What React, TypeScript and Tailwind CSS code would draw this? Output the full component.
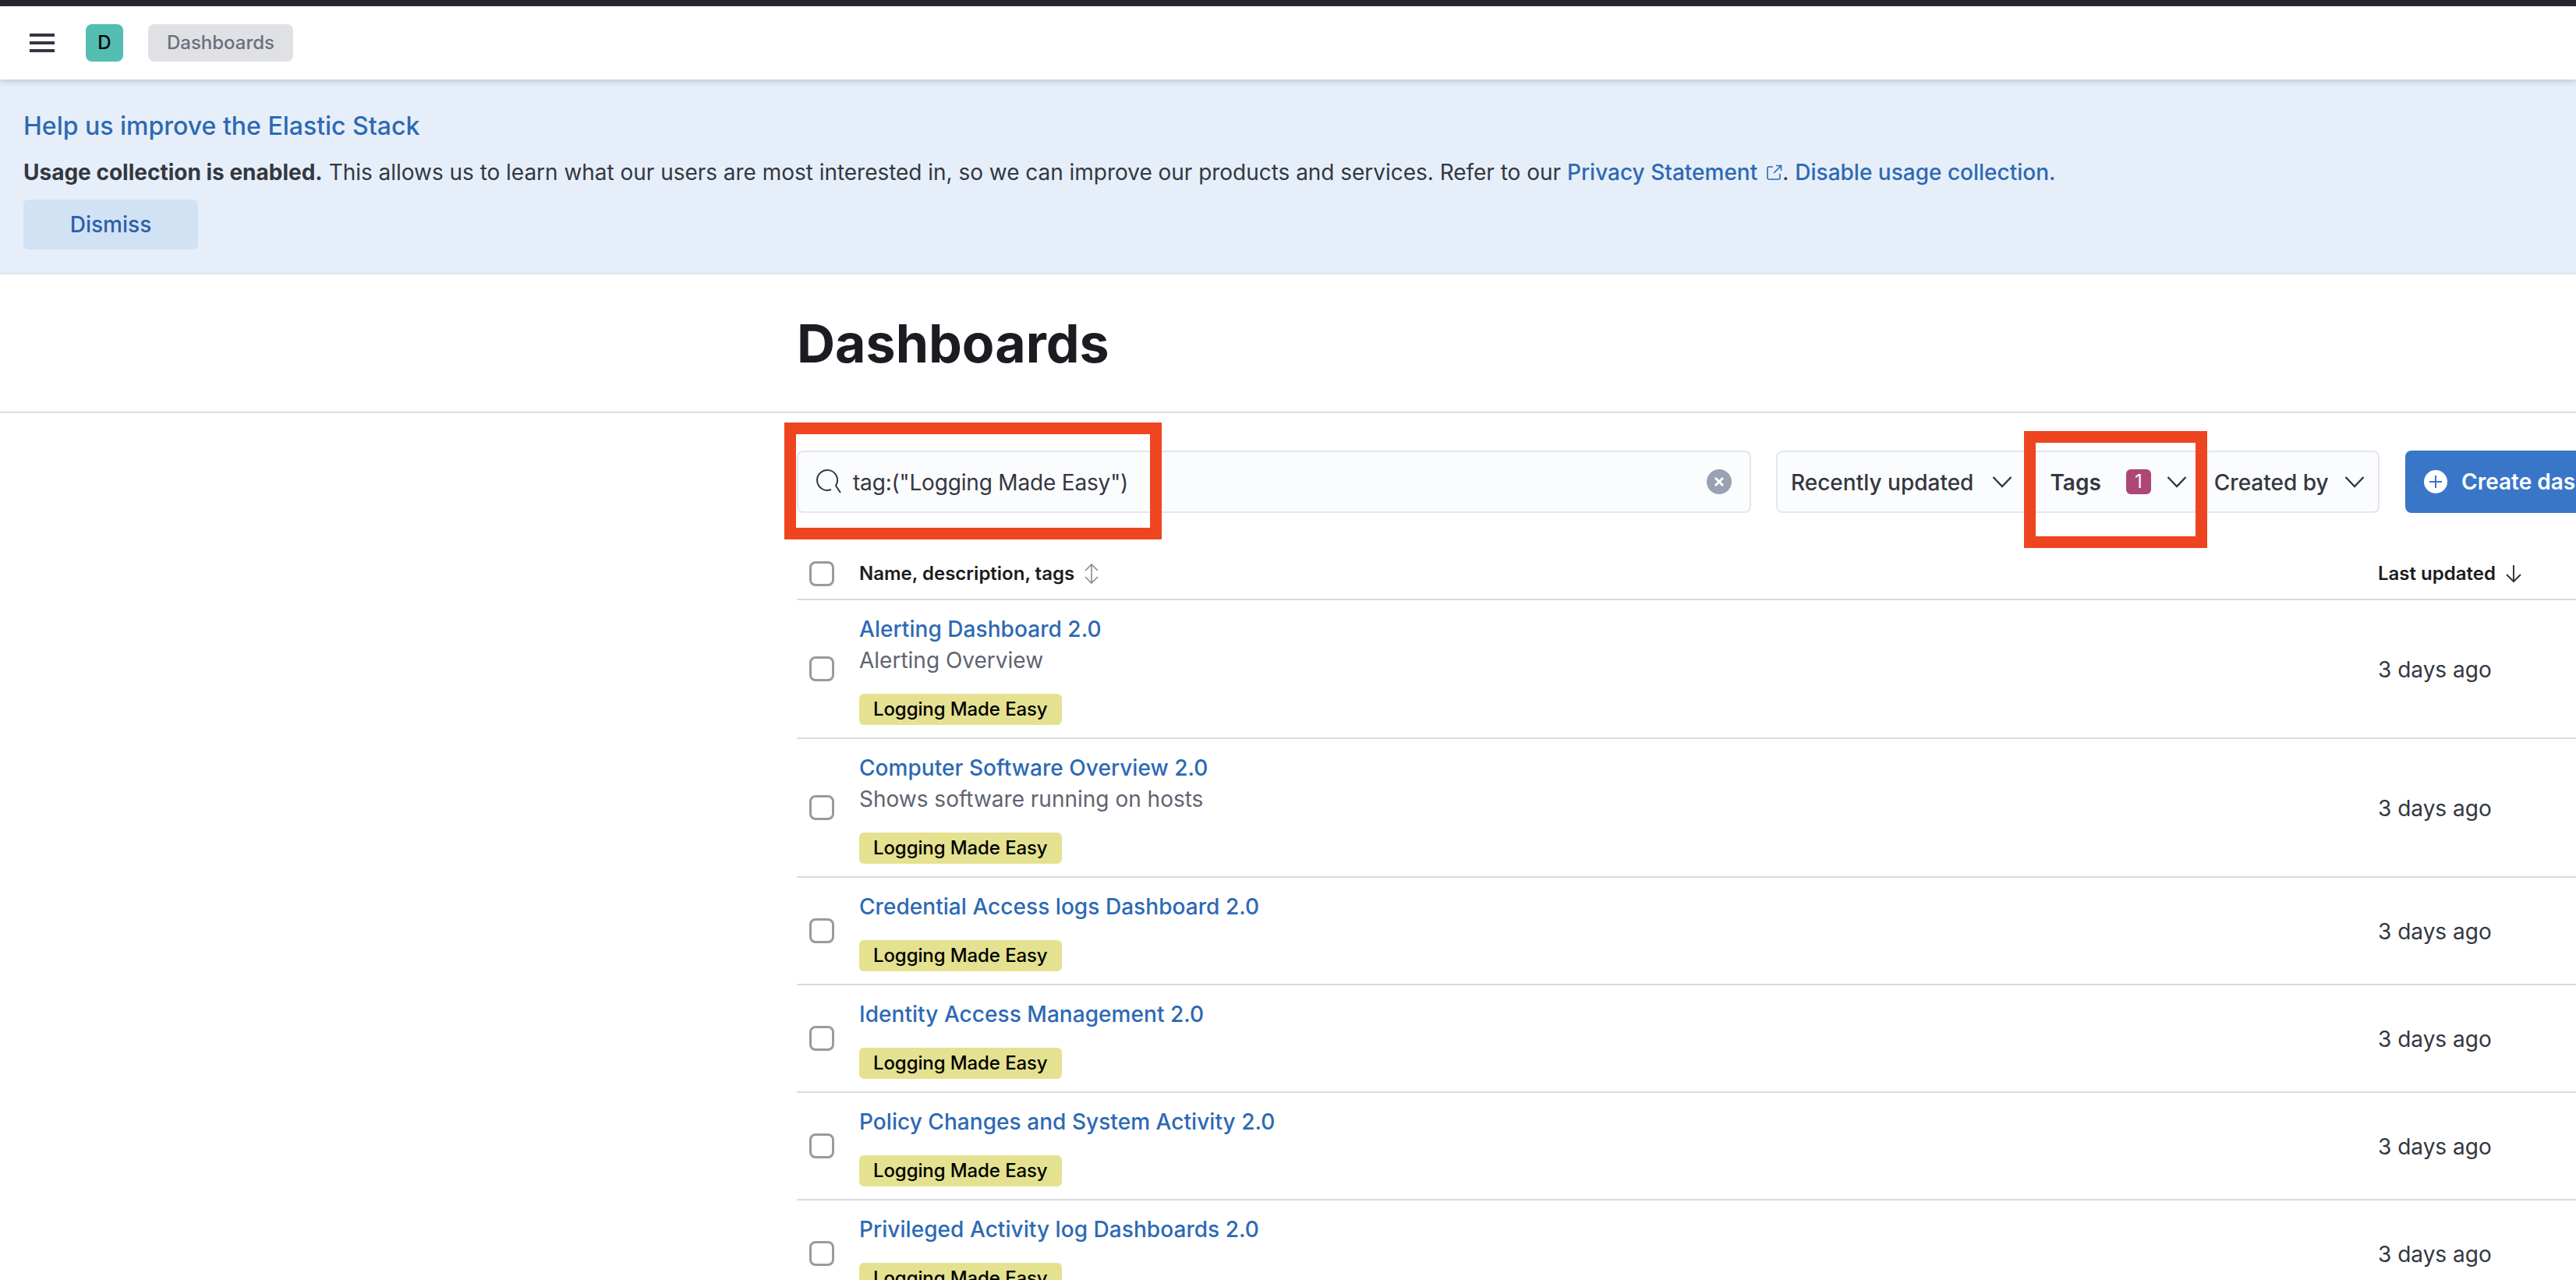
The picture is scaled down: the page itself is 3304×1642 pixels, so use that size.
const rows = [
  { title: "Alerting Dashboard 2.0", description: "Alerting Overview" },
  { title: "Computer Software Overview 2.0", description: "Shows software running on hosts" },
  { title: "Credential Access logs Dashboard 2.0" },
  { title: "Identity Access Management 2.0" },
  { title: "Policy Changes and System Activity 2.0" },
  { title: "Privileged Activity log Dashboards 2.0" },
];

function Chevron({ className }: { className?: string }) {
  return (
    <svg className={className} width="26" height="16" viewBox="0 0 26 16" fill="none" stroke="#343741" strokeWidth="2.4">
      <path d="M1.5 2 L13 14 L24.5 2" />
    </svg>
  );
}

function Checkbox() {
  return <div className="h-8 w-8 shrink-0 rounded-lg border-[3px] border-[#9a9a9c] bg-white" />;
}

function Row({ title, description }: { title: string; description?: string }) {
  return (
    <div className="flex items-center border-b-2 border-[#d6dbe8]">
      <div className="flex w-20 shrink-0 pl-4">
        <Checkbox />
      </div>
      <div className="w-[1948px] shrink-0 pt-[17px] pb-4">
        <div className="text-[28px] leading-10 font-medium tracking-[0.05px] text-[#2d69b4]">{title}</div>
        {description && <div className="text-[28px] leading-10 text-[#5f6470]">{description}</div>}
        <div className="mt-[23px] flex">
          <span className="flex h-10 items-center rounded-md bg-[#e4e290] px-[18px] text-2xl font-medium tracking-[-0.1px] text-black">
            Logging Made Easy
          </span>
        </div>
      </div>
      <div className="pt-[1px] text-[28px] text-[#343741]">3 days ago</div>
    </div>
  );
}

export default function App() {
  return (
    <div className="relative h-[1642px] w-[3304px] overflow-hidden bg-white font-['Inter',sans-serif]">
      <div className="h-2 bg-[#25262e]" />

      {/* top nav */}
      <header className="relative z-10 flex h-[94px] items-center bg-white pl-[38px] shadow-[0_2px_8px_rgba(90,110,140,0.35)]">
        <svg width="32" height="24" viewBox="0 0 32 24" fill="#343741">
          <rect width="32" height="4" />
          <rect y="10" width="32" height="4" />
          <rect y="20" width="32" height="4" />
        </svg>
        <div className="ml-10 flex h-12 w-12 items-center justify-center rounded-lg bg-[#54bdb2] text-2xl font-medium text-black">
          D
        </div>
        <div className="ml-8 flex h-12 w-[186px] items-center justify-center rounded-lg bg-[#e0e1e4] text-2xl font-medium text-[#69707d]">
          Dashboards
        </div>
      </header>

      {/* usage banner */}
      <section className="h-[250px] border-b-2 border-[#dde5ee] bg-[#e6eff9] pt-10 pl-[30px]">
        <h2 className="text-[32px] leading-10 font-medium text-[#2d69b4]">Help us improve the Elastic Stack</h2>
        <p className="mt-[19px] flex items-center text-[28px] leading-10 text-[#343741]">
          <strong className="font-bold">Usage collection is enabled.</strong>
          <span className="ml-2 tracking-[-0.03px]">
            This allows us to learn what our users are most interested in, so we can improve our products and services. Refer to our
          </span>
          <span className="ml-2 font-medium text-[#2d69b4]">Privacy Statement</span>
          <svg className="ml-[12px]" width="20" height="20" viewBox="0 0 20 20" fill="none" stroke="#2d69b4" strokeWidth="1.6">
            <path d="M8 3 H3 Q1 3 1 5 V17 Q1 19 3 19 H15 Q17 19 17 17 V12" />
            <path d="M9 11 L18 2 M12 1.5 H18.5 V8" />
          </svg>
          <span>.</span>
          <span className="ml-2 font-medium text-[#2d69b4]">Disable usage collection.</span>
        </p>
        <button className="mt-[15px] flex h-16 w-56 items-center justify-center rounded-md bg-[#d1e2f5] text-[28px] font-medium text-[#2c5fa8]">
          Dismiss
        </button>
      </section>

      {/* page title */}
      <div className="h-[178px] border-b-2 border-[#d6dbe8] pt-[47px] pl-[1022px]">
        <h1 className="text-[68px] leading-[82px] font-bold text-[#1a1c21]">Dashboards</h1>
      </div>

      <main className="box-content w-[2600px] pt-12 pl-[1022px]">
        {/* toolbar */}
        <div className="flex h-20 items-stretch">
          <div className="flex w-[1224px] items-center rounded-lg border-2 border-[#e3e6ee] bg-[#fbfcfd] pr-[23px] pl-[22px]">
            <svg width="34" height="34" viewBox="0 0 34 34" fill="none" stroke="#343741" strokeWidth="2">
              <path d="M20 27 A13 13 0 1 1 26 22 L32 31" />
            </svg>
            <span className="ml-[14px] flex-1 pt-[1px] text-[28px] tracking-[-0.18px] text-[#343741]">tag:("Logging Made Easy")</span>
            <svg width="32" height="32" viewBox="0 0 32 32">
              <circle cx="16" cy="16" r="16" fill="#98a2b3" />
              <path d="M11 11 L21 21 M21 11 L11 21" stroke="#fff" strokeWidth="3" />
            </svg>
          </div>
          <div className="ml-8 flex w-[774px] items-center rounded-lg border-2 border-[#e3e6ee] bg-[#fbfcfd] pl-[17px]">
            <span className="pt-[1px] text-[28px] font-medium text-[#343741]">Recently updated</span>
            <Chevron className="ml-6" />
            <span className="ml-[48px] pt-[1px] text-[28px] font-semibold text-[#343741]">Tags</span>
            <span className="ml-8 flex h-8 w-8 items-center justify-center rounded-md bg-[#ae4676] text-2xl text-white">1</span>
            <Chevron className="ml-5" />
            <span className="ml-[35px] pt-[1px] text-[28px] font-medium text-[#343741]">Created by</span>
            <Chevron className="ml-5" />
          </div>
          <button className="ml-[33px] flex w-[400px] items-center rounded-lg bg-[#3a76c8] pl-6 text-[28px] font-semibold text-white">
            <svg width="30" height="30" viewBox="0 0 30 30">
              <circle cx="15" cy="15" r="15" fill="#fff" />
              <path d="M15 7 V23 M7 15 H23" stroke="#3a76c8" strokeWidth="2" />
            </svg>
            <span className="ml-[18px]">Create dashboard</span>
          </button>
        </div>

        {/* table */}
        <div className="mt-[46px] flex h-[66px] items-center border-b-2 border-[#d6dbe8]">
          <div className="flex w-20 shrink-0 pl-4">
            <Checkbox />
          </div>
          <div className="flex w-[1948px] shrink-0 items-center">
            <span className="text-2xl font-semibold text-[#1a1c21]">Name, description, tags</span>
            <svg className="ml-3" width="20" height="26" viewBox="0 0 20 26" fill="none" stroke="#8a8c90" strokeWidth="1.6">
              <path d="M2 9 L10 1 L18 9 M2 17 L10 25 L18 17 M10 1 V25" />
            </svg>
          </div>
          <span className="text-2xl font-semibold text-[#1a1c21]">Last updated</span>
          <svg className="ml-3" width="22" height="24" viewBox="0 0 22 24" fill="none" stroke="#343741" strokeWidth="2">
            <path d="M11 1 V22 M2 13 L11 22 L20 13" />
          </svg>
        </div>
        {rows.map((row) => (
          <Row key={row.title} title={row.title} description={row.description} />
        ))}
      </main>

      {/* red annotation boxes */}
      <div className="absolute top-[542px] left-[1006px] h-[150px] w-[484px] border-[15px] border-[#ee4520]" />
      <div className="absolute top-[553px] left-[2596px] h-[150px] w-[235px] border-[15px] border-[#ee4520]" />
    </div>
  );
}
